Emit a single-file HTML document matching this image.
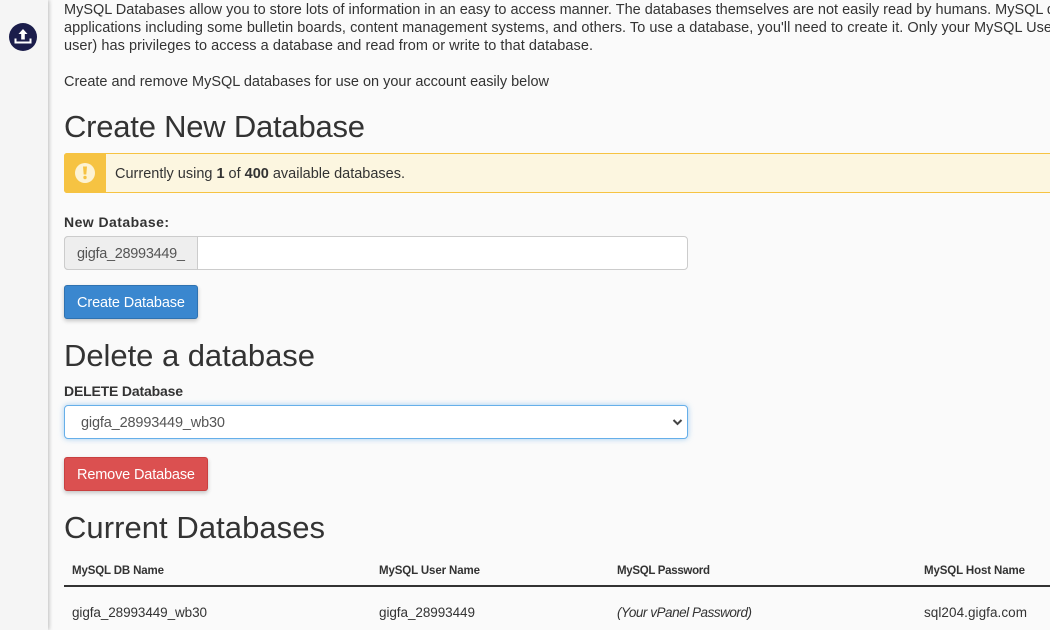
<!DOCTYPE html>
<html><head><meta charset="utf-8"><style>
html,body{margin:0;padding:0;width:1050px;height:630px;overflow:hidden;background:#fafafa}
div{position:absolute;box-sizing:border-box}
svg{position:absolute;left:0;top:0}
text{font-family:"Liberation Sans",sans-serif;font-size:14.5px;fill:#333}
.h{font-size:31px;fill:#333}
.b{font-weight:bold}
.t{font-size:11.5px;font-weight:bold;fill:#333}
.g{fill:#555}
.w{fill:#fff}
</style></head><body>
<div style="left:0;top:0;width:48px;height:630px;background:#f5f5f5;box-shadow:1px 0 4px rgba(0,0,0,.25)"></div>
<div style="left:64px;top:153px;width:1000px;height:40px;background:#fcf6e0;border:1px solid #f6c342;border-radius:3px"></div>
<div style="left:64px;top:153px;width:42px;height:40px;background:#f6c342;border-radius:3px 0 0 3px"></div>
<div style="left:64px;top:236px;width:624px;height:34px;background:#fff;border:1px solid #ccc;border-radius:4px"></div>
<div style="left:64px;top:236px;width:134px;height:34px;background:#eee;border:1px solid #ccc;border-radius:4px 0 0 4px"></div>
<div style="left:64px;top:285px;width:134px;height:34px;background:#3a87cf;border:1px solid #2f72b0;border-radius:3px;box-shadow:0 2px 4px rgba(0,0,0,.22)"></div>
<div style="left:64px;top:405px;width:624px;height:34px;background:#fff;border:1px solid #66afe9;border-radius:4px;box-shadow:0 0 6px rgba(102,175,233,.6)"></div>
<div style="left:64px;top:457px;width:144px;height:34px;background:#db5050;border:1px solid #c94040;border-radius:3px;box-shadow:0 2px 4px rgba(0,0,0,.22)"></div>
<div style="left:64px;top:585px;width:986px;height:2px;background:#333"></div>
<svg width="1050" height="630" viewBox="0 0 1050 630">
<circle cx="23" cy="37" r="14" fill="#1b1d4b"/>
<path d="M23 29l4.500 5h-2.700v5.500h-3.600v-5.500h-2.700z" fill="#fff"/>
<path d="M15.500 38.500v4h15v-4" fill="none" stroke="#fff" stroke-width="2"/>
<circle cx="85" cy="173" r="10" fill="#fdf3d4"/>
<path d="M83 166.500h4l-.7 8h-2.600z" fill="#f6c342"/>
<circle cx="85" cy="177.500" r="1.700" fill="#f6c342"/>
<path d="M673.500 420l4 4 4-4" fill="none" stroke="#444" stroke-width="2"/>
<text x="64" y="14" textLength="991" lengthAdjust="spacing">MySQL Databases allow you to store lots of information in an easy to access manner. The databases themselves are not easily read by humans. MySQL d</text>
<text x="64" y="32" textLength="988" lengthAdjust="spacing">applications including some bulletin boards, content management systems, and others. To use a database, you'll need to create it. Only your MySQL Use</text>
<text x="64" y="50" textLength="529" lengthAdjust="spacing">user) has privileges to access a database and read from or write to that database.</text>
<text x="64" y="86" textLength="485" lengthAdjust="spacing">Create and remove MySQL databases for use on your account easily below</text>
<text class="h" x="64" y="137" textLength="301" lengthAdjust="spacing">Create New Database</text>
<text x="115" y="178" textLength="290" lengthAdjust="spacing">Currently using <tspan class="b">1</tspan> of <tspan class="b">400</tspan> available databases.</text>
<text class="b" x="64" y="227" style="font-size:14px" textLength="105" lengthAdjust="spacing">New Database:</text>
<text class="g" x="77" y="258" textLength="108" lengthAdjust="spacing">gigfa_28993449_</text>
<text class="w" x="77" y="307" textLength="108" lengthAdjust="spacing">Create Database</text>
<text class="h" x="64" y="366" textLength="251" lengthAdjust="spacing">Delete a database</text>
<text class="b" x="64" y="396" style="font-size:14px" textLength="119" lengthAdjust="spacing">DELETE Database</text>
<text class="g" x="81" y="427" textLength="144" lengthAdjust="spacing">gigfa_28993449_wb30</text>
<text class="w" x="77" y="479" textLength="118" lengthAdjust="spacing">Remove Database</text>
<text class="h" x="64" y="538" textLength="261" lengthAdjust="spacing">Current Databases</text>
<text class="t" x="72" y="574" textLength="92" lengthAdjust="spacing">MySQL DB Name</text>
<text class="t" x="379" y="574" textLength="101" lengthAdjust="spacing">MySQL User Name</text>
<text class="t" x="617" y="574" textLength="93" lengthAdjust="spacing">MySQL Password</text>
<text class="t" x="924" y="574" textLength="101" lengthAdjust="spacing">MySQL Host Name</text>
<text x="72" y="617" style="font-size:13.5px" textLength="135" lengthAdjust="spacing">gigfa_28993449_wb30</text>
<text x="379" y="617" style="font-size:13.5px" textLength="96" lengthAdjust="spacing">gigfa_28993449</text>
<text x="617" y="617" style="font-size:13.5px;font-style:italic" textLength="135" lengthAdjust="spacing">(Your vPanel Password)</text>
<text x="924" y="617" style="font-size:13.5px" textLength="103" lengthAdjust="spacing">sql204.gigfa.com</text>
</svg>
</body></html>
